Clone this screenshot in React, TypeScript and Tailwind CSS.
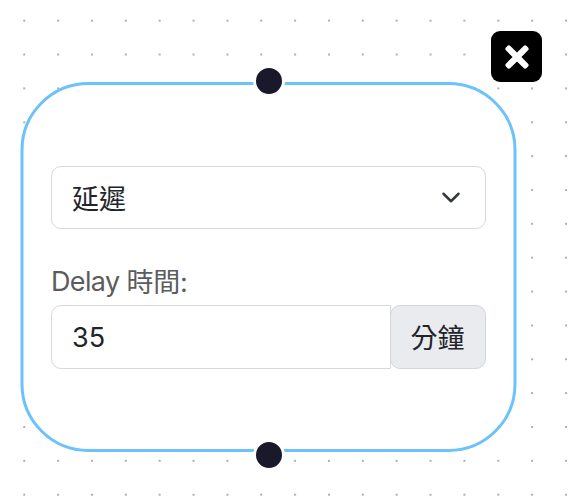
import React from "react";
import { FaTimes } from "react-icons/fa";

function DotGrid() {
  return (
    <svg className="absolute inset-0 h-full w-full" aria-hidden="true">
      <defs>
        <pattern id="dots" x="7.3" y="3.75" width="33.86" height="33.86" patternUnits="userSpaceOnUse">
          <circle cx="16.93" cy="16.93" r="0.9" fill="#8a8a8a" />
        </pattern>
      </defs>
      <rect width="100%" height="100%" fill="url(#dots)" />
    </svg>
  );
}

function Handle({ className }: { className: string }) {
  return (
    <span
      className={`absolute left-[248.5px] size-[32px] -translate-x-1/2 rounded-full border-[3px] border-white bg-[#1a192b] ${className}`}
    />
  );
}

function DelayNode() {
  return (
    <section className="relative mt-[82px] ml-[20px] h-[370px] w-[497px]">
      <div className="h-full w-[496px] translate-x-[0.5px] rounded-[68px] border-[3px] border-[#6cc2fb] bg-white" />
      <div className="absolute inset-0 flex flex-col px-[31px] pt-[84px]">
        <button className="flex h-[63px] w-[435px] shrink-0 items-center justify-between rounded-[10px] border border-[#d5d8dd] bg-white pr-[24px] pl-[20px] text-[#212529]">
          <span className="pt-[5px]">延遲</span>
          <svg className="h-[20px] w-[20px]" viewBox="0 0 16 16" fill="none" stroke="#343a40" strokeWidth="2" strokeLinecap="round" strokeLinejoin="round">
            <path d="m2 4.6 6 6 6-6" />
          </svg>
        </button>
        <label className="mt-[33px] block h-[43px] leading-[40px] text-[#5c5c5c]">
          <span className="tracking-[-0.65px]">Delay </span>
          <span className="relative top-px tracking-[-0.2px]">時間:</span>
        </label>
        <div className="flex h-[64px] w-[435px]">
          <div className="flex w-[340px] items-center rounded-l-[10px] border border-[#d5d8dd] bg-white pt-[2px] pl-[20px] text-[#212529]">35</div>
          <div className="-ml-px flex flex-1 items-center justify-center rounded-[10px] border border-[#d3d6db] bg-[#e9ebef] pt-[5px] pr-[1px] text-[#212529]">分鐘</div>
        </div>
      </div>
      <Handle className="-top-[17px]" />
      <Handle className="-bottom-[19px]" />
      <button aria-label="Close" className="absolute -top-[51px] left-[471px] flex size-[51px] items-center justify-center rounded-[9px] bg-black">
        <FaTimes className="size-[34px] text-white" />
      </button>
    </section>
  );
}

export default function App() {
  return (
    <main className="relative flex h-[498px] w-[572px] items-start overflow-hidden bg-white font-['Inter','Noto_Sans_CJK_TC',sans-serif] text-[27px]">
      <DotGrid />
      <DelayNode />
    </main>
  );
}
